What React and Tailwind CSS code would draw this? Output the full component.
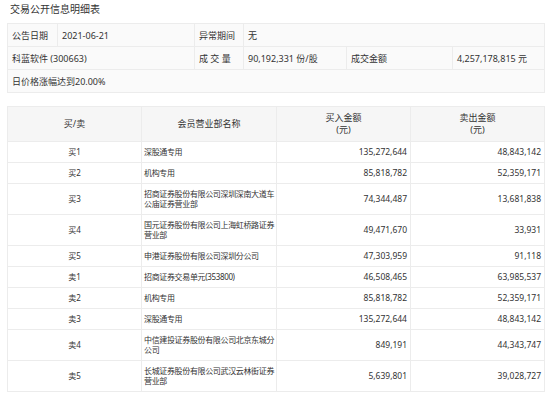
import React from 'react';

const rows = [
  ['买1', '深股通专用', '135,272,644', '48,843,142'],
  ['买2', '机构专用', '85,818,782', '52,359,171'],
  ['买3', '招商证券股份有限公司深圳深南大道车公庙证券营业部', '74,344,487', '13,681,838'],
  ['买4', '国元证券股份有限公司上海虹桥路证券营业部', '49,471,670', '33,931'],
  ['买5', '申港证券股份有限公司深圳分公司', '47,303,959', '91,118'],
  ['卖1', '招商证券交易单元(353800)', '46,508,465', '63,985,537'],
  ['卖2', '机构专用', '85,818,782', '52,359,171'],
  ['卖3', '深股通专用', '135,272,644', '48,843,142'],
  ['卖4', '中信建投证券股份有限公司北京东城分公司', '849,191', '44,343,747'],
  ['卖5', '长城证券股份有限公司武汉云林街证券营业部', '5,639,801', '39,028,727'],
];

const td = 'border border-[#ececec] px-[4px] h-[23px] align-middle';
const cell = 'border border-[#ececec] py-[5px]';

export default function App() {
  return (
    <div className="w-[550px] h-[393px] overflow-hidden bg-white px-[7px] text-[#333] text-[9px]"
      style={{ fontFamily: '"Noto Sans", "Noto Sans CJK SC", sans-serif' }}>
      <div className="pt-[2px] pl-[3px] text-[10px] leading-[14px] text-[#333]">交易公开信息明细表</div>

      <table className="mt-[7px] w-[537px] table-fixed border-collapse bg-[#fafafa] leading-[11px]">
        <colgroup>
          <col className="w-[50px]" /><col className="w-[137px]" /><col className="w-[49px]" />
          <col className="w-[103px]" /><col className="w-[106px]" /><col className="w-[92px]" />
        </colgroup>
        <tbody>
          <tr>
            <td className={td}>公告日期</td>
            <td className={td}>2021-06-21</td>
            <td className={td}>异常期间</td>
            <td className={td} colSpan={3}>无</td>
          </tr>
          <tr>
            <td className={td} colSpan={2}>科蓝软件 (300663)</td>
            <td className={td}>成 交 量</td>
            <td className={td}>90,192,331 份/股</td>
            <td className={td}>成交金额</td>
            <td className={td}>4,257,178,815 元</td>
          </tr>
          <tr>
            <td className={td} colSpan={6}>日价格涨幅达到20.00%</td>
          </tr>
        </tbody>
      </table>

      <table className="mt-[13px] w-[537px] table-fixed border-collapse leading-[10px]">
        <colgroup>
          <col className="w-[134px]" /><col className="w-[135px]" /><col className="w-[134px]" /><col className="w-[134px]" />
        </colgroup>
        <thead className="bg-[#f6f6f6]">
          <tr className="leading-[12px]">
            <th className="border border-[#ececec] font-normal h-[35px]">买/卖</th>
            <th className="border border-[#ececec] font-normal">会员营业部名称</th>
            <th className="border border-[#ececec] font-normal">买入金额<br />(元)</th>
            <th className="border border-[#ececec] font-normal">卖出金额<br />(元)</th>
          </tr>
        </thead>
        <tbody>
          {rows.map((r, i) => (
            <tr key={i}>
              <td className={`${cell} text-center text-[8px]`}>{r[0]}</td>
              <td className={`${cell} pl-[2px] pr-0 text-[8px] tracking-[-0.35px]`}>{r[1]}</td>
              <td className={`${cell} px-[3px] text-right text-[8.5px]`}>{r[2]}</td>
              <td className={`${cell} px-[3px] text-right text-[8.5px]`}>{r[3]}</td>
            </tr>
          ))}
        </tbody>
      </table>
    </div>
  );
}
